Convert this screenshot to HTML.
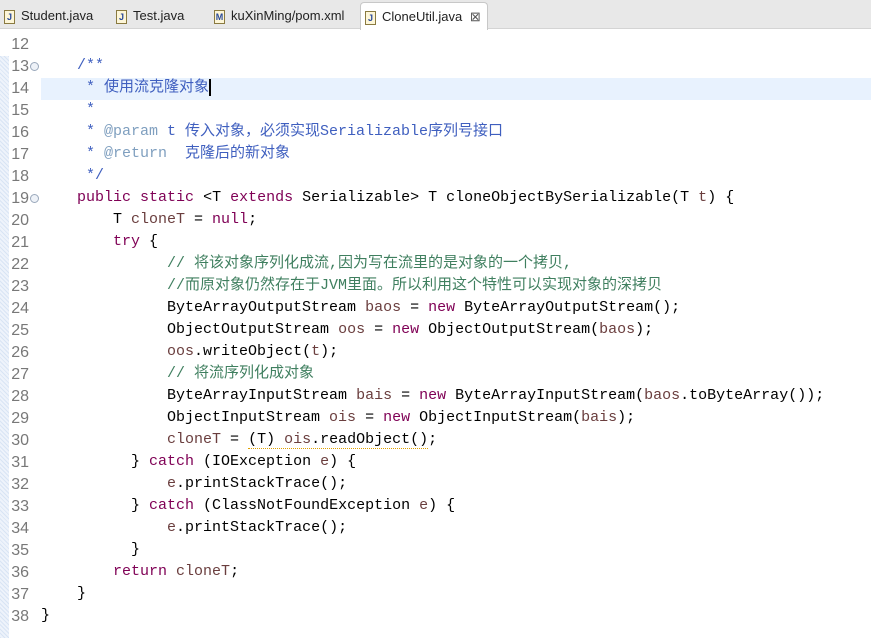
<!DOCTYPE html>
<html><head><meta charset="utf-8"><style>
body{margin:0;width:871px;height:638px;background:#fff;overflow:hidden;position:relative;font-family:"Liberation Mono","Noto Sans CJK SC",monospace;}
.tabs{position:absolute;left:0;top:0;width:871px;height:28px;background:#e8e8e8;border-bottom:1px solid #d4d4d4;font-family:"Liberation Sans",sans-serif;font-size:13px;color:#222;}
.tab{position:absolute;top:4px;height:24px;line-height:24px;}
.tab.act{background:#fff;border:1px solid #c8c8c8;border-bottom:none;border-radius:4px 4px 0 0;top:2px;height:27px;line-height:27px;}
.ic{display:inline-block;width:9px;height:12px;border:1px solid #8a7a40;background:#fdf6d8;vertical-align:middle;margin-right:6px;font-size:9px;line-height:12px;text-align:center;color:#2a4a9a;font-weight:bold;}
.gut{position:absolute;left:0;top:56px;width:9px;height:582px;background:repeating-linear-gradient(45deg,#d8e4f4 0 1px,#eef3fb 1px 3px);}
.hl{position:absolute;left:41px;top:78px;width:830px;height:22px;background:#e8f2fe;}
.nums{position:absolute;left:0;top:34px;width:29px;text-align:right;font-family:"Liberation Sans",sans-serif;font-size:16px;line-height:22px;color:#787878;}
.code{position:absolute;left:41px;top:33px;font-size:15px;line-height:22px;white-space:pre;color:#000;}
.k{color:#7f0055}.jd{color:#3f5fbf}.jt{color:#7f9fbf}.c{color:#3f7f5f}.v{color:#6a3e3e}
.fold{position:absolute;left:30px;width:7px;height:7px;border:1px solid #9aa8bb;border-radius:50%;background:#eef2f8;}
</style></head><body>
<div class="tabs">
<div class="tab" style="left:4px"><span class="ic">J</span>Student.java</div>
<div class="tab" style="left:116px"><span class="ic">J</span>Test.java</div>
<div class="tab" style="left:214px"><span class="ic">M</span>kuXinMing/pom.xml</div>
<div class="tab act" style="left:360px;width:122px;padding-left:4px"><span class="ic">J</span>CloneUtil.java <span style="margin-left:4px;color:#555">⊠</span></div>
</div>
<div class="gut"></div>
<div class="hl"></div>
<div class="fold" style="top:62px"></div>
<div class="fold" style="top:194px"></div>
<div class="nums">12<br>13<br>14<br>15<br>16<br>17<br>18<br>19<br>20<br>21<br>22<br>23<br>24<br>25<br>26<br>27<br>28<br>29<br>30<br>31<br>32<br>33<br>34<br>35<br>36<br>37<br>38</div>
<div class="code">
    <span class="jd">/**</span>
<span class="jd">     * 使用流克隆对象</span><span style="border-left:2px solid #000"></span>
<span class="jd">     *</span>
<span class="jd">     * </span><span class="jt">@param</span><span class="jd"> t 传入对象，必须实现Serializable序列号接口</span>
<span class="jd">     * </span><span class="jt">@return</span><span class="jd">  克隆后的新对象</span>
<span class="jd">     */</span>
    <span class="k">public</span> <span class="k">static</span> &lt;T <span class="k">extends</span> Serializable&gt; T cloneObjectBySerializable(T <span class="v">t</span>) {
        T <span class="v">cloneT</span> = <span class="k">null</span>;
        <span class="k">try</span> {
              <span class="c">// 将该对象序列化成流,因为写在流里的是对象的一个拷贝,</span>
              <span class="c">//而原对象仍然存在于JVM里面。所以利用这个特性可以实现对象的深拷贝</span>
              ByteArrayOutputStream <span class="v">baos</span> = <span class="k">new</span> ByteArrayOutputStream();
              ObjectOutputStream <span class="v">oos</span> = <span class="k">new</span> ObjectOutputStream(<span class="v">baos</span>);
              <span class="v">oos</span>.writeObject(<span class="v">t</span>);
              <span class="c">// 将流序列化成对象</span>
              ByteArrayInputStream <span class="v">bais</span> = <span class="k">new</span> ByteArrayInputStream(<span class="v">baos</span>.toByteArray());
              ObjectInputStream <span class="v">ois</span> = <span class="k">new</span> ObjectInputStream(<span class="v">bais</span>);
              <span class="v">cloneT</span> = <span style="border-bottom:1px dotted #e0a000">(T) <span class="v">ois</span>.readObject()</span>;
          } <span class="k">catch</span> (IOException <span class="v">e</span>) {
              <span class="v">e</span>.printStackTrace();
          } <span class="k">catch</span> (ClassNotFoundException <span class="v">e</span>) {
              <span class="v">e</span>.printStackTrace();
          }
        <span class="k">return</span> <span class="v">cloneT</span>;
    }
}</div>
</body></html>
